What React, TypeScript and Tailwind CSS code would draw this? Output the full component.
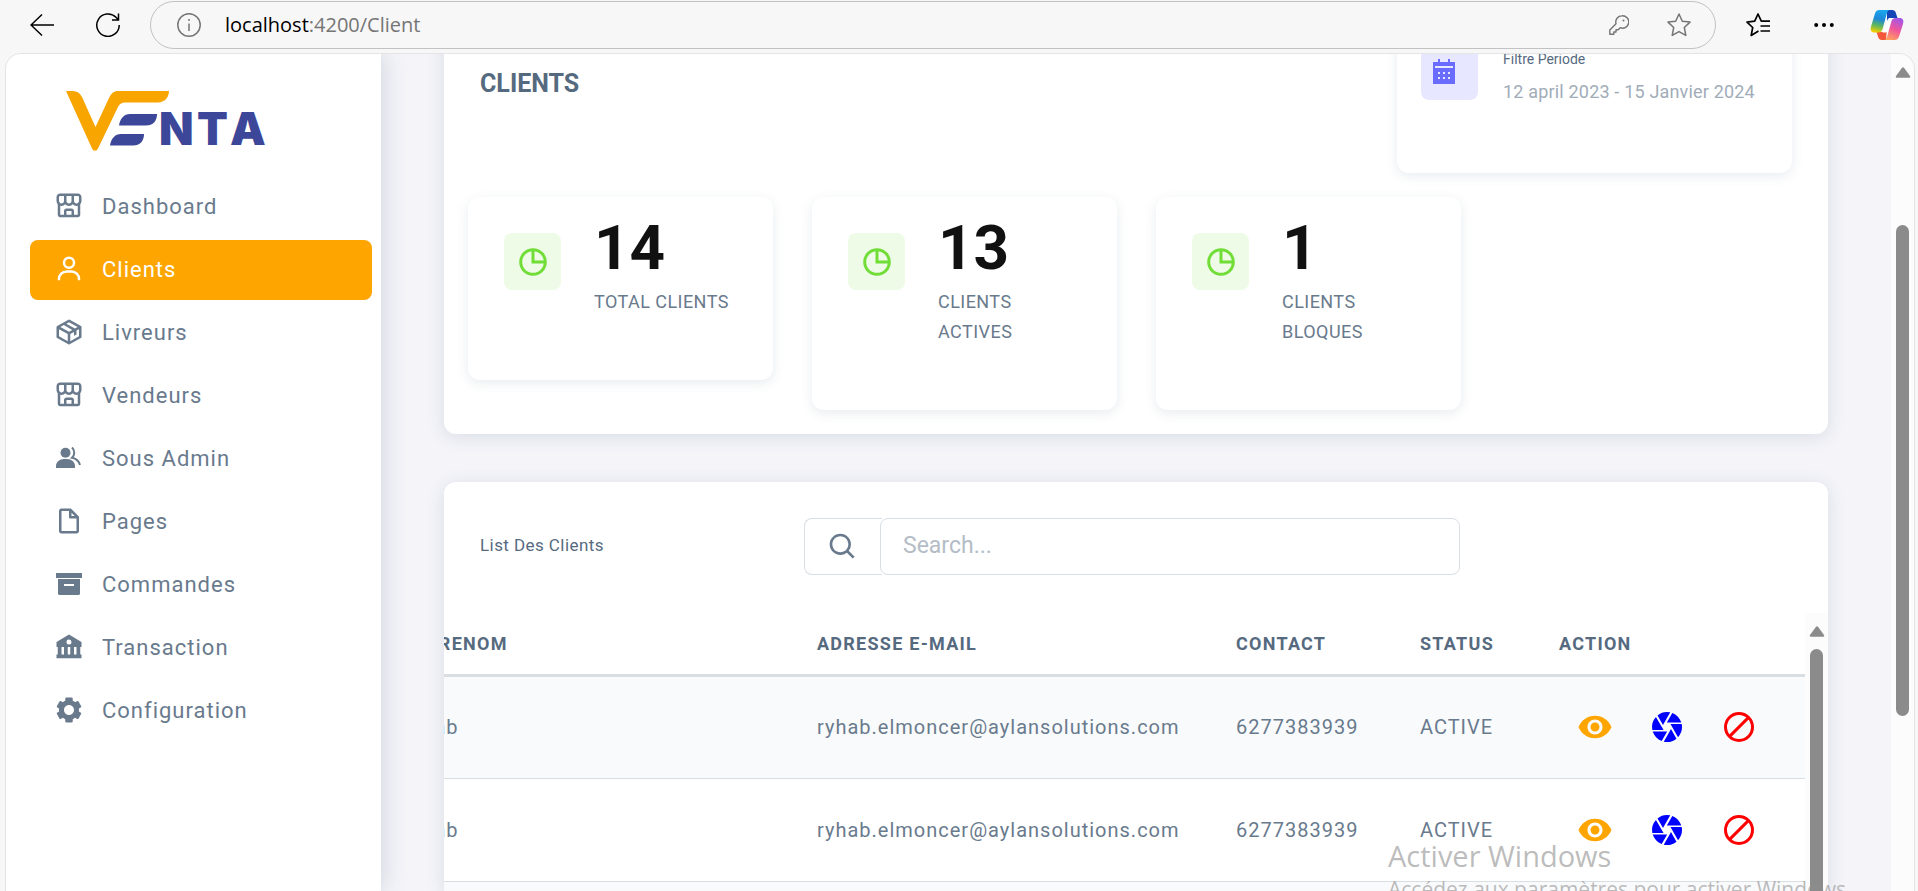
import type { ReactNode } from "react";
import { BiStoreAlt, BiUser, BiPackage, BiFileBlank, BiSearch, BiSolidBank, BiSolidCog } from "react-icons/bi";
import { MdCamera, MdRemoveRedEye } from "react-icons/md";

interface NavItem {
    label: string;
    icon: ReactNode;
    active?: boolean;
}

interface Client {
    prenom: string;
    email: string;
    contact: string;
    status: string;
}

const UsersIcon = () => (
    <svg width={30} height={30} viewBox="0 0 30 30" fill="currentColor">
        <circle cx="11.500" cy="9.800" r="5" />
        <path d="M2 25v-2c0-4 3.500-7 8-7h3c4.500 0 8 3 8 7v2z" />
        <path d="M18 4.500c3 2.700 3 7.600 0 10.300 4.200.8 6.800 3.200 8 7.200" fill="none" stroke="currentColor" strokeWidth="2" />
    </svg>
);

const ArchiveIcon = () => (
    <svg width={30} height={30} viewBox="0 0 30 30" fill="currentColor">
        <path d="M2 4h26v5H2z" />
        <path fillRule="evenodd" d="M4 10h22v15l-1 1H5l-1-1zM10 15v2h10v-2z" />
    </svg>
);

const CalendarIcon = () => (
    <svg width={22} height={25} viewBox="0 0 22 25" fill="currentColor">
        <path
            fillRule="evenodd"
            d="M0 3h5V0h2v3h8V0h2v3h5v22H0zM2 7v2h18V7zM5 13v2h2v-2zM10 13v2h2v-2zM15 13v2h2v-2zM5 18v2h2v-2zM10 18v2h2v-2zM15 18v2h2v-2z"
        />
    </svg>
);

const navItems: NavItem[] = [
    { label: "Dashboard", icon: <BiStoreAlt size={30} /> },
    { label: "Clients", icon: <BiUser size={30} />, active: true },
    { label: "Livreurs", icon: <BiPackage size={30} /> },
    { label: "Vendeurs", icon: <BiStoreAlt size={30} /> },
    { label: "Sous Admin", icon: <UsersIcon /> },
    { label: "Pages", icon: <BiFileBlank size={30} /> },
    { label: "Commandes", icon: <ArchiveIcon /> },
    { label: "Transaction", icon: <BiSolidBank size={30} /> },
    { label: "Configuration", icon: <BiSolidCog size={30} /> },
];

const stats = [
    { value: 14, label: "TOTAL CLIENTS" },
    { value: 13, label: "CLIENTS ACTIVES" },
    { value: 1, label: "CLIENTS BLOQUES" },
];

const client: Client = {
    prenom: "ryhab",
    email: "ryhab.elmoncer@aylansolutions.com",
    contact: "6277383939",
    status: "ACTIVE",
};
const clients: Client[] = [client, client, client];

const CopilotLogo = () => (
    <svg width={34} height={32} viewBox="0 0 34 32">
        <defs>
            <linearGradient id="cp-left" x1="0.5" y1="0" x2="0.3" y2="1">
                <stop offset="0" stopColor="#1aa7ee" />
                <stop offset="0.4" stopColor="#1e88d8" />
                <stop offset="0.7" stopColor="#5fb85b" />
                <stop offset="1" stopColor="#f7d000" />
            </linearGradient>
            <linearGradient id="cp-right" x1="0.7" y1="0" x2="0.3" y2="1">
                <stop offset="0" stopColor="#a455e8" />
                <stop offset="0.5" stopColor="#f0569a" />
                <stop offset="1" stopColor="#ffa25c" />
            </linearGradient>
        </defs>
        <path d="M17 1h5c2.500 0 3.500 1.500 4 3.500L27.500 9H22c-3 0-4 1-5 4z" fill="#1546b8" />
        <path d="M16 31h-4c-2.500 0-3.500-1.500-4-3.500L6.500 23H12c3 0 4-1 5-4z" fill="#f4573a" />
        <path d="M9.500 1H20c-1.500 0-2.500 1-3.200 3.500l-4 14.500C12 22 11 23.500 8 23.500H4.500C1 23.500 0 21 1 17.500l4-13C5.800 2 7 1 9.500 1z" fill="url(#cp-left)" />
        <path d="M24.500 31H14c1.500 0 2.500-1 3.200-3.500l4-14.500C22 10 23 9 26 9h3.500C33 9 34 11.500 33 15l-4 12.500c-.8 2.500-2 3.500-4.500 3.500z" fill="url(#cp-right)" />
        <path d="M17.500 11c.5-1.500 1.500-2 3-2h3c-1.500.5-2 1.500-2.500 3.500l-3 9c-.5 1.500-1.500 2-3 2h-2.500z" fill="#fff" />
    </svg>
);

const BrowserBar = () => (
    <header className="flex h-[53px] shrink-0 items-center pr-[14px] pb-[3px] pl-[30px] text-black">
        <button aria-label="Back">
            <svg width={24} height={24} viewBox="0 0 24 24" fill="none" stroke="currentColor" strokeWidth="1.500">
                <path d="M24 12H1M12 1.500 1 12l11 10.500" />
            </svg>
        </button>
        <button aria-label="Reload" className="ml-[42px]">
            <svg width={24} height={24} viewBox="0 0 24 24" fill="none" stroke="currentColor" strokeWidth="1.500">
                <path d="M23.200 12A11.200 11.200 0 1 1 20 4.300l2 2.200M22.500 0.500v6.500h-6.500" />
            </svg>
        </button>
        <div className="ml-[30px] flex h-12 flex-1 items-center rounded-full border border-[#c2c2c2] pr-6 pl-[26px] text-[#757575]">
            <svg width={24} height={24} viewBox="0 0 24 24" fill="none" stroke="currentColor" strokeWidth="1.500">
                <circle cx="12" cy="12" r="11.200" />
                <path d="M12 10.500v7.500M12 6v2" />
            </svg>
            <p className="ml-6 flex-1 font-['Open_Sans',sans-serif] text-[20px]">
                <span className="text-black">localhost</span>:4200/Client
            </p>
            <svg width={20} height={20} viewBox="0 0 20 20" fill="none" stroke="currentColor" strokeWidth="1.400">
                <path d="M13 .8a6.200 6.200 0 0 0-6 7.900L.8 15v4.200h4V17h2.200v-2.300h2.200l2-2a6.200 6.200 0 1 0 1.800-11.900z" strokeLinejoin="round" />
                <circle cx="14.500" cy="5.500" r="1" fill="currentColor" stroke="none" />
            </svg>
            <svg className="ml-[38px]" width={24} height={24} viewBox="0 0 24 24" fill="none" stroke="currentColor" strokeWidth="1.500" strokeLinejoin="round">
                <path d="m12 1 3.300 7.200 7.700.9-5.700 5.400 1.500 7.900L12 18.600l-6.800 3.800 1.500-7.900L1 9.100l7.700-.9z" />
            </svg>
        </div>
        <button aria-label="Favorites" className="ml-[30px]">
            <svg width={24} height={24} viewBox="0 0 24 24" fill="none" stroke="currentColor" strokeWidth="1.700" strokeLinejoin="round">
                <path d="M24 8.200h-8.700L12 1 8.700 8.200 1 9.100l5.700 5.400-1.500 7.900L12.500 18M14.500 13H24M14.500 18H24" />
            </svg>
        </button>
        <button aria-label="More" className="mr-9 ml-11">
            <svg width={20} height={20} viewBox="0 0 20 20" fill="currentColor">
                <circle cx="2.200" cy="10" r="2" />
                <circle cx="10" cy="10" r="2" />
                <circle cx="17.800" cy="10" r="2" />
            </svg>
        </button>
        <button aria-label="Copilot">
            <CopilotLogo />
        </button>
    </header>
);

const Logo = () => (
    <svg width={204} height={62} viewBox="66 90 204 62" role="img" aria-label="Venta">
        <path
            d="M66 91h7c4 0 7 2 9 6l13.500 30L109 98c2-4.500 5-7 9-7h51c0 6.500-4.500 11.500-11 11.500h-33c-3.500 0-5.500 1.500-7 4.500l-20 41.500c-1.200 3-4.800 3-6 0z"
            fill="#f9a500"
        />
        <path d="M119 125.500c1-7 5-11.500 11-11.500h27c0 7-4 11.500-11 11.500z" fill="#3d4799" />
        <path d="M110 145.500c1-7 5-11.500 11-11.500h23c0 7-4 11.500-11 11.500z" fill="#3d4799" />
        <text x="159 197 230" y="145" fontFamily="Inter, sans-serif" fontWeight="900" fontSize="45" fill="#3d4799">
            NTA
        </text>
    </svg>
);

const Sidebar = () => (
    <aside className="z-10 w-[375px] shrink-0 bg-white shadow-[0_0_24px_rgba(67,89,113,0.22)]">
        <a href="#" className="block pt-9 pb-[25px] pl-[60px]">
            <Logo />
        </a>
        <nav className="flex flex-col gap-[3px] pr-[9px] pl-6">
            {navItems.map((item) => (
                <a
                    key={item.label}
                    href="#"
                    className={`flex h-15 items-center gap-4.5 rounded-lg pb-0.5 pl-6 text-[22px] tracking-[1px] ${item.active ? "bg-[#ffa500] text-white" : "text-[#697a8d]"}`}>
                    {item.icon}
                    {item.label}
                </a>
            ))}
        </nav>
    </aside>
);

const StatCard = ({ value, label }: { value: number; label: string }) => (
    <div className="flex w-[305px] items-start gap-[33px] rounded-xl bg-white px-9 pt-6 pb-[63px] shadow-[0_3px_12px_rgba(67,89,113,0.12)]">
        <div className="mt-3 flex size-[57px] shrink-0 items-center justify-center rounded-lg bg-[#edfbe7]">
            <svg width={28} height={28} viewBox="0 0 28 28" fill="none" stroke="#71dd37" strokeWidth="3">
                <circle cx="14" cy="14" r="12.300" />
                <path d="M14 2v12h12" />
            </svg>
        </div>
        <div>
            <p className="text-[62px] leading-[54px] font-bold text-[#111]">{value}</p>
            <p className="mt-3 text-[18px] leading-[30px] tracking-wide text-[#697a8d]">{label}</p>
        </div>
    </div>
);

const Overview = () => (
    <section className="-mt-[71px] rounded-xl bg-white py-6 shadow-[0_3px_18px_rgba(67,89,113,0.14)]">
        <div className="flex items-start justify-between px-9">
            <h1 className="pt-[53px] text-[25px] leading-[48px] font-bold text-[#566a7f]">CLIENTS</h1>
            <div className="flex h-[166px] w-[395px] items-start gap-[25px] rounded-xl px-6 pt-9 shadow-[0_3px_12px_rgba(67,89,113,0.12)]">
                <div className="flex size-[57px] shrink-0 items-center rounded-lg bg-[#e7e7ff] pl-3 text-[#696cff]">
                    <CalendarIcon />
                </div>
                <div>
                    <p className="text-[14px] leading-[32px] text-[#566a7f]">Filtre Periode</p>
                    <p className="text-[18px] leading-[34px] tracking-[0.01em] text-[#a1acb8]">12 april 2023 - 15 Janvier 2024</p>
                </div>
            </div>
        </div>
        <div className="mt-6 flex items-start gap-[39px] pl-6">
            {stats.map((stat) => (
                <StatCard key={stat.label} value={stat.value} label={stat.label} />
            ))}
        </div>
    </section>
);

const ScrollBar = ({ thumb }: { thumb: string }) => (
    <div className="flex w-[23px] shrink-0 flex-col items-center bg-[#fcfcfc] pt-[13px]">
        <svg className="shrink-0" width={16} height={11} viewBox="0 0 16 11" fill="#8b8b8b">
            <path d="M6.800 1a1.500 1.500 0 0 1 2.400 0l5.800 8c.5.800 0 1.700-1 1.700H2c-1 0-1.500-.9-1-1.700z" />
        </svg>
        <div className={`w-[13px] shrink-0 bg-[#8b8b8b] ${thumb}`} />
    </div>
);

const ClientsTable = () => (
    <div className="flex min-h-0 flex-1">
        <div className="flex min-w-0 flex-1 items-start justify-end overflow-hidden">
            <table className="w-[1431px] shrink-0 table-fixed text-left">
                <colgroup>
                    <col />
                    <col className="w-[419px]" />
                    <col className="w-[184px]" />
                    <col className="w-[139px]" />
                    <col className="w-[276px]" />
                </colgroup>
                <thead>
                    <tr className="h-[62px] border-b-3 border-[#d9dee3] text-[18px] tracking-[0.07em] text-[#566a7f]">
                        <th className="pl-[52px]">PRENOM</th>
                        <th className="px-[30px]">ADRESSE E-MAIL</th>
                        <th className="px-[30px]">CONTACT</th>
                        <th className="px-[30px]">STATUS</th>
                        <th className="px-[30px]">ACTION</th>
                    </tr>
                </thead>
                <tbody>
                    {clients.map((row, index) => (
                        <tr key={index} className="h-[103px] border-b border-[#d9dee3] text-[20px] tracking-[1px] text-[#697a8d] odd:bg-[#f9fafc]">
                            <td className="pl-[30px]">{row.prenom}</td>
                            <td className="px-[30px]">{row.email}</td>
                            <td className="px-[30px]">{row.contact}</td>
                            <td className="px-[30px]">{row.status}</td>
                            <td className="pl-12">
                                <div className="flex gap-9">
                                    <button aria-label="Voir" className="text-[#ffa500]">
                                        <MdRemoveRedEye size={36} />
                                    </button>
                                    <button aria-label="Photo" className="text-[#0000ff]">
                                        <MdCamera size={36} />
                                    </button>
                                    <button aria-label="Bloquer" className="text-[#ff0000]">
                                        <svg width={36} height={36} viewBox="0 0 24 24" fill="none" stroke="currentColor" strokeWidth="2">
                                            <circle cx="12" cy="12" r="9" />
                                            <path d="M5.600 18.400 18.400 5.600" />
                                        </svg>
                                    </button>
                                </div>
                            </td>
                        </tr>
                    ))}
                </tbody>
            </table>
        </div>
        <ScrollBar thumb="mt-3 h-[500px] rounded-full" />
    </div>
);

const ClientsList = () => (
    <section className="mt-12 flex min-h-0 flex-1 flex-col rounded-t-xl bg-white shadow-[0_3px_18px_rgba(67,89,113,0.14)]">
        <div className="flex items-center pt-9 pb-[38px] pl-9">
            <h2 className="w-[324px] pb-0.5 text-[17px] tracking-wide text-[#566a7f]">List Des Clients</h2>
            <form role="search" className="flex h-[57px] w-[656px]">
                <label htmlFor="search" className="flex w-[78px] items-center rounded-l-lg border border-r-0 border-[#d9dee3] pl-[22px] text-[#697a8d]">
                    <BiSearch size={32} />
                </label>
                <input
                    id="search"
                    type="text"
                    placeholder="Search..."
                    className="-ml-0.5 min-w-0 flex-1 rounded-lg border border-[#d9dee3] bg-white px-[22px] text-[23px] outline-none placeholder:text-[#b4bdc6]"
                />
            </form>
        </div>
        <ClientsTable />
    </section>
);

const App = () => {
    return (
        <div className="relative flex h-dvh flex-col overflow-hidden bg-[#f7f7f7] font-[Roboto,sans-serif]">
            <BrowserBar />
            <div className="mr-[3px] ml-[5px] flex min-h-0 flex-1 overflow-hidden rounded-t-2xl border-x border-t border-[#e4e4e4] bg-[#f4f4f9]">
                <Sidebar />
                <main className="flex min-w-0 flex-1 flex-col px-[63px]">
                    <Overview />
                    <ClientsList />
                </main>
                <ScrollBar thumb="mt-[147px] h-[491px] rounded-full" />
            </div>
            <div className="pointer-events-none absolute top-[836px] left-[1388px] z-20 font-['Open_Sans',sans-serif] whitespace-nowrap text-[#8f8f8f]/60">
                <p className="text-[29px] leading-[40px]">Activer Windows</p>
                <p className="text-[21px] leading-[26px]">Accédez aux paramètres pour activer Windows.</p>
            </div>
        </div>
    );
};

export default App;
